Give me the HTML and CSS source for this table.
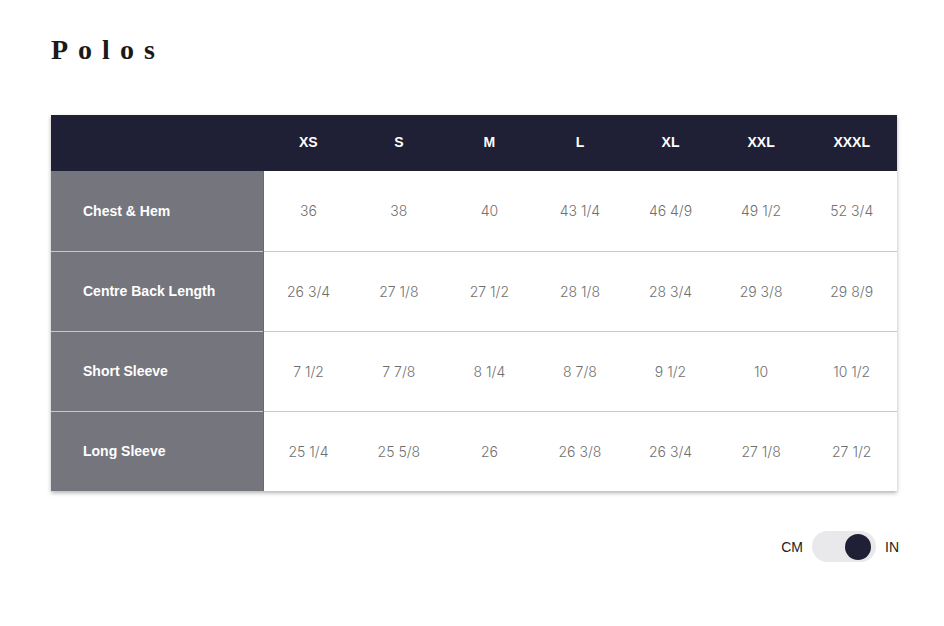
FILE: index.html
```html
<!DOCTYPE html>
<html>
<head>
<meta charset="utf-8">
<link rel="stylesheet" href="styles.css">
</head>
<body>
<div class="page">
  <h1 class="title">Polos</h1>
  <table class="sizes">
    <thead>
      <tr><th class="corner"></th><th>XS</th><th>S</th><th>M</th><th>L</th><th>XL</th><th>XXL</th><th>XXXL</th></tr>
    </thead>
    <tbody>
      <tr><th class="label">Chest &amp; Hem</th><td>36</td><td>38</td><td>40</td><td>43 1/4</td><td>46 4/9</td><td>49 1/2</td><td>52 3/4</td></tr>
      <tr><th class="label">Centre Back Length</th><td>26 3/4</td><td>27 1/8</td><td>27 1/2</td><td>28 1/8</td><td>28 3/4</td><td>29 3/8</td><td>29 8/9</td></tr>
      <tr><th class="label">Short Sleeve</th><td>7 1/2</td><td>7 7/8</td><td>8 1/4</td><td>8 7/8</td><td>9 1/2</td><td>10</td><td>10 1/2</td></tr>
      <tr><th class="label">Long Sleeve</th><td>25 1/4</td><td>25 5/8</td><td>26</td><td>26 3/8</td><td>26 3/4</td><td>27 1/8</td><td>27 1/2</td></tr>
    </tbody>
  </table>
  <div class="units">
    <span class="unit">CM</span>
    <span class="switch"><span class="knob"></span></span>
    <span class="unit">IN</span>
  </div>
</div>
</body>
</html>
```
FILE: styles.css
```css
html, body { margin: 0; padding: 0; background: #fff; }
body { font-family: "Liberation Sans", Arial, sans-serif; }
.page { padding: 34px 45px 0 51px; }
.title {
  margin: 0;
  font-family: "Liberation Serif", "Times New Roman", serif;
  font-weight: bold;
  font-size: 28px;
  letter-spacing: 10px;
  color: #1a1a1a;
  line-height: 32px;
}
.sizes {
  margin-top: 49px;
  width: 846px;
  border-collapse: collapse;
  table-layout: fixed;
  box-shadow: 0 2px 4px rgba(0,0,0,0.3);
}
.sizes thead tr { background: #1f2035; height: 56px; }
.sizes thead th {
  color: #fff;
  font-size: 14px;
  font-weight: bold;
  text-align: center;
  padding: 0 0 2px;
}
.sizes thead th.corner { width: 212px; }
.sizes tbody tr { height: 80px; border-top: 1px solid #c9c9cc; }
.sizes tbody tr:first-child { border-top: none; }
.sizes tbody th.label {
  background: #75757d;
  color: #fff;
  font-size: 14px;
  font-weight: bold;
  text-align: left;
  padding: 0 0 0 32px;
  border-right: 1px solid #6a6a72;
}
.sizes tbody td {
  text-align: center;
  font-family: Inter, "Liberation Sans", sans-serif;
  font-weight: 300;
  font-size: 14px;
  color: #707070;
  padding: 0;
}
.units {
  display: flex;
  justify-content: flex-end;
  align-items: center;
  gap: 9px;
  margin-top: 40px;
}
.unit { font-size: 14px; color: #222; }
.switch {
  width: 64px;
  height: 31px;
  border-radius: 16px;
  background: #e9e9eb;
  display: flex;
  align-items: center;
  justify-content: flex-end;
  padding: 0 5px;
  box-sizing: border-box;
}
.knob {
  width: 26px;
  height: 26px;
  border-radius: 50%;
  background: #1f2035;
}
```
